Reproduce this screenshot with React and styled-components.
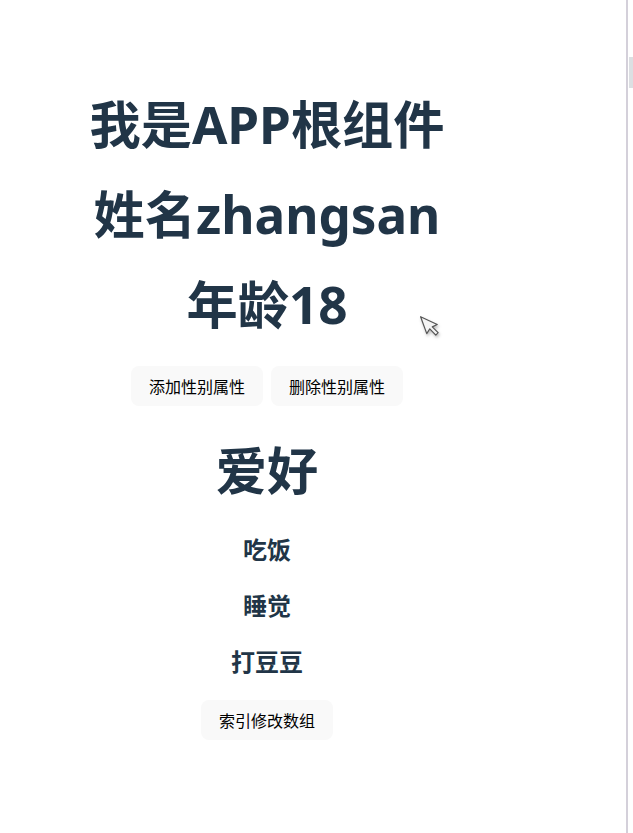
import styled, { createGlobalStyle } from 'styled-components';

const GlobalStyle = createGlobalStyle`
  html, body {
    margin: 0;
    padding: 0;
    background: #ffffff;
  }
  body {
    font-family: "Noto Sans", "Noto Sans CJK SC", sans-serif;
    color: #213547;
  }
`;

const Frame = styled.div`
  display: flex;
  width: 633px;
  height: 833px;
  overflow: hidden;
  position: relative;
`;

const Page = styled.main`
  width: 626px;
  flex: none;
`;

const Divider = styled.div`
  width: 2px;
  background: #d4d0da;
  flex: none;
`;

const ScrollTrack = styled.div`
  flex: 1;
  padding-top: 57px;
  padding-left: 1px;
`;

const ScrollThumb = styled.div`
  height: 31px;
  background: #dcdfe2;
`;

const Content = styled.div`
  width: 534px;
  padding-top: 62px;
  text-align: center;
`;

const Title = styled.h1`
  font-size: 51.2px;
  line-height: 56px;
  font-weight: 700;
  margin: 34px 0;
`;

const Item = styled.h2`
  font-size: 24px;
  line-height: 36px;
  font-weight: 700;
  margin: 20px 0;
`;

const ButtonRow = styled.div`
  display: flex;
  justify-content: center;
  gap: 8px;
  height: 42px;
  align-items: flex-start;
  margin-top: ${p => p.$top || 0}px;
`;

const Button = styled.button`
  font-family: "Noto Sans CJK SC", sans-serif;
  font-size: 16px;
  line-height: 20px;
  font-weight: 400;
  color: #000;
  background: #f9f9f9;
  border: 1px solid transparent;
  border-radius: 8px;
  padding: 9px 17px;
  cursor: pointer;
`;

const Cursor = styled.svg`
  position: absolute;
  left: 420px;
  top: 311px;
  width: 24px;
  height: 32px;
  filter: drop-shadow(1px 2px 1.5px rgba(0, 0, 0, 0.25));
`;

export default function App() {
  const hobbies = ['吃饭', '睡觉', '打豆豆'];

  return (
    <>
      <GlobalStyle />
      <Frame>
        <Page>
          <Content>
            <Title>我是APP根组件</Title>
            <Title>姓名zhangsan</Title>
            <Title>年龄18</Title>
            <ButtonRow>
              <Button type="button">添加性别属性</Button>
              <Button type="button">删除性别属性</Button>
            </ButtonRow>
            <Title>爱好</Title>
            {hobbies.map(h => (
              <Item key={h}>{h}</Item>
            ))}
            <ButtonRow $top={2}>
              <Button type="button">索引修改数组</Button>
            </ButtonRow>
          </Content>
        </Page>
        <Divider />
        <ScrollTrack>
          <ScrollThumb />
        </ScrollTrack>
        <Cursor viewBox="0 0 24 32">
          <path
            d="M4 3 L4 21 L8.5 17.5 L12 25.5 L15 24 L11.5 16.5 L17 16 Z"
            transform="rotate(-20 10 14)"
            fill="#f4f4f4"
            stroke="#555"
            strokeWidth="1.2"
            strokeLinejoin="round"
          />
        </Cursor>
      </Frame>
    </>
  );
}
